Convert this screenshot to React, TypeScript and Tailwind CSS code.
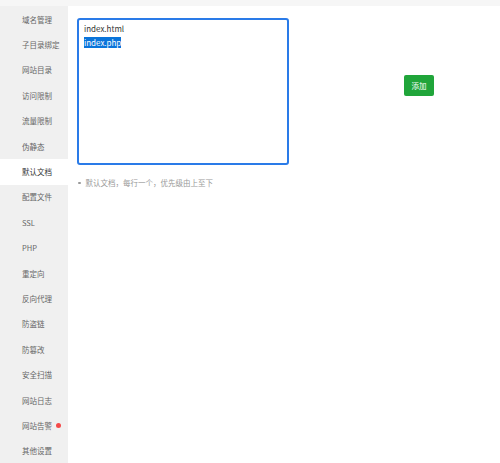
import React from "react";

const items = [
  "域名管理",
  "子目录绑定",
  "网站目录",
  "访问限制",
  "流量限制",
  "伪静态",
  "默认文档",
  "配置文件",
  "SSL",
  "PHP",
  "重定向",
  "反向代理",
  "防盗链",
  "防篡改",
  "安全扫描",
  "网站日志",
  "网站告警",
  "其他设置",
];

export default function App() {
  return (
    <div
      className="w-[500px] h-[463px] flex flex-col bg-white overflow-hidden"
      style={{ fontFamily: '"Noto Sans CJK SC", "Noto Sans", sans-serif' }}
    >
      <div className="h-[6px] bg-[#f6f6f6] shrink-0" />
      <div className="flex flex-1 min-h-0">
        <div className="w-[68px] bg-[#f0f0f0] shrink-0 flex flex-col pt-[1px]">
          {items.map((it) => {
            const active = it === "默认文档";
            return (
              <div
                key={it}
                className={
                  active
                    ? "h-[25.4px] shrink-0 flex items-center pl-[22px] text-[7.5px] leading-[10px] text-[#333] bg-white"
                    : "h-[25.4px] shrink-0 flex items-center pl-[22px] text-[7.5px] leading-[10px] text-[#666]"
                }
              >
                <span>{it}</span>
                {it === "网站告警" && (
                  <span className="ml-[4px] w-[5px] h-[5px] rounded-full bg-[#f44a4a]" />
                )}
              </div>
            );
          })}
        </div>
        <div className="flex-1 pl-[9px] pt-[12px]">
          <div className="flex">
            <div className="w-[212px] h-[147px] border-2 border-[#2a7be8] rounded-[3px] px-[5px] pt-[2px] text-[8px] text-[#333] leading-[14px]">
              <div>index.html</div>
              <div>
                <span className="bg-[#0a74da] text-white">index.php</span>
              </div>
            </div>
            <div className="ml-[115px] mt-[57px]">
              <div className="w-[30px] h-[21px] rounded-[2px] bg-[#20a53a] text-white text-[7.5px] flex items-center justify-center">
                添加
              </div>
            </div>
          </div>
          <div className="mt-[13px] flex items-center text-[7.5px] text-[#999] leading-[10px]">
            <span className="w-[2.5px] h-[2.5px] rounded-full bg-[#999] ml-[1px] mr-[5px]" />
            <span>默认文档，每行一个，优先级由上至下</span>
          </div>
        </div>
      </div>
    </div>
  );
}
